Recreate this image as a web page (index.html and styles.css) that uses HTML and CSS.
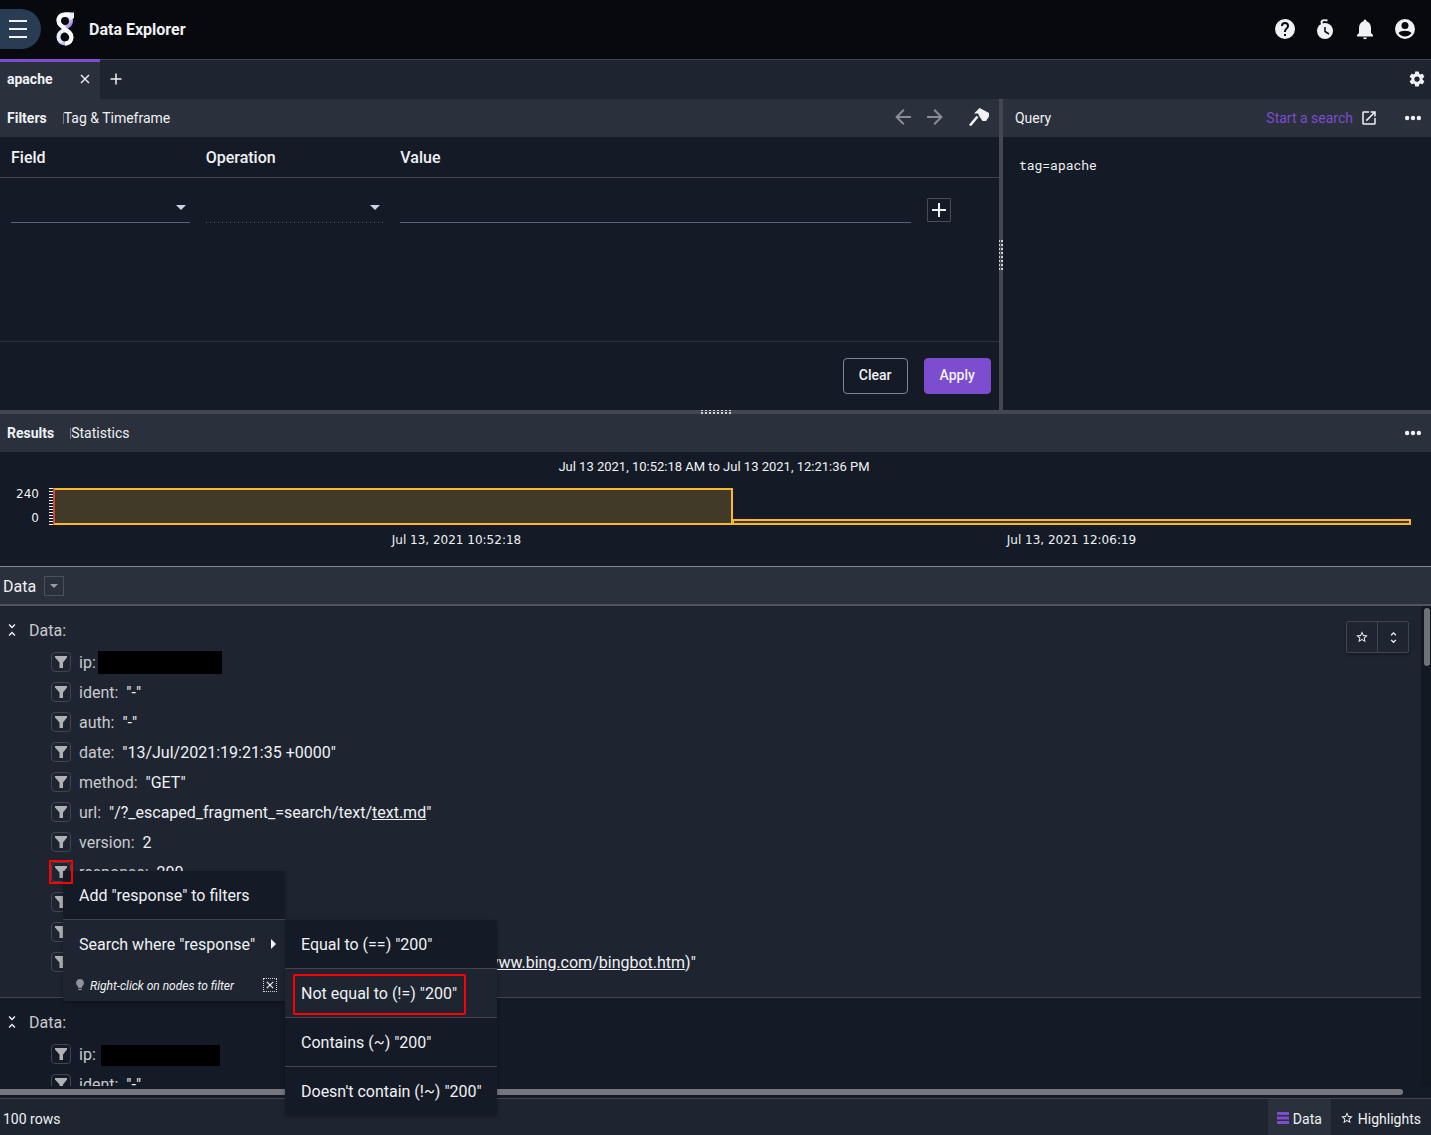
FILE: index.html
```html
<!DOCTYPE html>
<html lang="en">
<head>
<meta charset="utf-8">
<meta name="viewport" content="width=device-width, initial-scale=1">
<title>Data Explorer</title>
<link rel="stylesheet" href="styles.css">
</head>
<body>
<svg class="sprite" aria-hidden="true">
  <symbol id="i-filter" viewBox="0 0 12 12"><path d="M0 0h12v1.500L8 6.500V12H4.500V6.500L0 1.500z"/></symbol>
  <symbol id="i-close" viewBox="0 0 10 10"><path d="M1 1l8 8M9 1L1 9" fill="none" stroke="currentColor" stroke-width="1.400"/></symbol>
  <symbol id="i-caret" viewBox="0 0 10 5"><path d="M0 0h10L5 5z"/></symbol>
  <symbol id="i-dots" viewBox="0 0 24 24"><path d="M16 12a2.400 2.400 0 1 1 4.800 0a2.400 2.400 0 0 1-4.800 0M9.600 12a2.400 2.400 0 1 1 4.800 0a2.400 2.400 0 0 1-4.800 0M3.200 12a2.400 2.400 0 1 1 4.800 0a2.400 2.400 0 0 1-4.800 0"/></symbol>
  <symbol id="i-less" viewBox="0 0 24 24"><path d="M16.590 5.410L15.170 4L12 7.170L8.830 4L7.410 5.410L12 10M7.410 18.590L8.830 20L12 16.830L15.170 20L16.580 18.590L12 14z"/></symbol>
  <symbol id="i-star" viewBox="0 0 24 24"><path d="M12 15.390L8.240 17.660L9.230 13.380L5.910 10.500L10.290 10.130L12 6.090L13.710 10.130L18.090 10.500L14.770 13.380L15.760 17.660M22 9.240L14.810 8.630L12 2L9.190 8.630L2 9.240L7.450 13.970L5.820 21L12 17.270L18.180 21L16.540 13.970z"/></symbol>
</svg>

<div class="app">
  <header class="topbar">
    <button class="nav-toggle" type="button" aria-label="Main menu">
      <svg width="18" height="18" viewBox="0 0 18 18"><path d="M0 1h18M0 9h18M0 17h18" stroke="currentColor" stroke-width="2"/></svg>
    </button>
    <svg class="logo" width="18" height="34" viewBox="0 0 18 34" fill="none" aria-hidden="true">
      <defs>
        <linearGradient id="lg" x1="0" y1="0" x2="1" y2="1"><stop offset="0" stop-color="#e4effc"/><stop offset=".5" stop-color="#dfe6f8"/><stop offset="1" stop-color="#9a78d8"/></linearGradient>
      </defs>
      <g fill="none">
        <circle cx="9" cy="9" r="6" stroke="url(#lg)" stroke-width="4"/>
        <circle cx="9" cy="25" r="6.500" stroke="url(#lg)" stroke-width="4"/>
        <path d="M8 .5H18V6l-3 2-3-4z" fill="#e4effc"/>
        <path d="M14 2.500H9C2.500 2.500 .5 9 4.500 13l8.500 7.500c4.500 4.500 2 11-4 11" stroke="#fff" stroke-width="4"/>
      </g>
    </svg>
    <h1 class="brand">Data Explorer</h1>
    <nav class="top-actions" aria-label="Account">
      <button type="button" aria-label="Help"><svg width="24" height="24" viewBox="0 0 24 24"><path d="M15.070 11.250L14.170 12.170C13.450 12.890 13 13.500 13 15H11V14.500C11 13.390 11.450 12.390 12.170 11.670L13.410 10.410C13.780 10.050 14 9.550 14 9A2 2 0 0 0 10 9H8A4 4 0 0 1 16 9C16 9.880 15.640 10.670 15.070 11.250M13 19H11V17H13M12 2A10 10 0 1 0 22 12C22 6.470 17.500 2 12 2z"/></svg></button>
      <button type="button" aria-label="Recent searches"><svg width="24" height="24" viewBox="0 0 24 24"><circle cx="12" cy="14" r="8"/><path d="M9 7C7.500 3.500 10 2.500 14.500 3.500" fill="none" stroke="currentColor" stroke-width="2"/><path d="M12 10v4.500l4 2.500" fill="none" stroke="#07090e" stroke-width="1.500"/></svg></button>
      <button type="button" aria-label="Notifications"><svg width="24" height="24" viewBox="0 0 24 24"><path d="M20 18V19.500H4V18L6 16V11C6 7.900 7.530 5.170 10.500 4.290V4A1.500 1.500 0 0 1 13.500 4V4.290C16.470 5.170 18 7.900 18 11V16L20 18M14 20.500A2 1.700 0 0 1 10 20.500"/></svg></button>
      <button type="button" aria-label="Account"><svg width="24" height="24" viewBox="0 0 24 24"><path fill-rule="evenodd" d="M12 2a10 10 0 1 1 0 20a10 10 0 0 1 0-20M12 5a3.500 3.500 0 1 0 0 7a3.500 3.500 0 0 0 0-7M5.500 16c1.500 2.300 3.900 3.500 6.500 3.500s5-1.200 6.500-3.500c-1.200-1.500-4-2.200-6.500-2.200s-5.300.7-6.500 2.200"/></svg></button>
    </nav>
  </header>

  <div class="tabbar">
    <div class="tab">
      <span>apache</span>
      <button type="button" aria-label="Close tab"><svg width="10" height="10"><use href="#i-close"/></svg></button>
    </div>
    <button class="tab-add" type="button" aria-label="New tab"><svg width="12" height="12" viewBox="0 0 12 12"><path d="M6 .5v11M.5 6h11" stroke="currentColor" stroke-width="1.500"/></svg></button>
    <button class="tab-settings" type="button" aria-label="Settings"><svg width="18" height="18" viewBox="0 0 24 24"><path d="M12 15.500A3.500 3.500 0 1 1 15.500 12A3.500 3.500 0 0 1 12 15.500M19.430 12.970C19.470 12.650 19.500 12.330 19.500 12S19.470 11.340 19.430 11L21.540 9.370C21.730 9.220 21.780 8.950 21.660 8.730L19.660 5.270C19.540 5.050 19.270 4.960 19.050 5.050L16.560 6.050C16.040 5.660 15.500 5.320 14.870 5.070L14.500 2.420C14.460 2.180 14.250 2 14 2H10C9.750 2 9.540 2.180 9.500 2.420L9.130 5.070C8.500 5.320 7.960 5.660 7.440 6.050L4.950 5.050C4.730 4.960 4.460 5.050 4.340 5.270L2.340 8.730C2.210 8.950 2.270 9.220 2.460 9.370L4.570 11C4.530 11.340 4.500 11.670 4.500 12S4.530 12.650 4.570 12.970L2.460 14.630C2.270 14.780 2.210 15.050 2.340 15.270L4.340 18.730C4.460 18.950 4.730 19.030 4.950 18.950L7.440 17.940C7.960 18.340 8.500 18.680 9.130 18.930L9.500 21.580C9.540 21.820 9.750 22 10 22H14C14.250 22 14.460 21.820 14.500 21.580L14.870 18.930C15.500 18.670 16.040 18.340 16.560 17.940L19.050 18.950C19.270 19.030 19.540 18.950 19.660 18.730L21.660 15.270C21.780 15.050 21.730 14.780 21.540 14.630z"/></svg></button>
  </div>

  <div class="panes">
    <section class="filters">
      <div class="panel-head">
        <button class="view active" type="button">Filters</button>
        <button class="view" type="button">Tag &amp; Timeframe</button>
        <div class="head-tools">
          <button class="dim" type="button" aria-label="Back"><svg width="24" height="24" viewBox="0 0 24 24"><path d="M20 11v2H8l5.500 5.500-1.420 1.420L4.160 12l7.920-7.920L13.500 5.500 8 11z"/></svg></button>
          <button class="dim" type="button" aria-label="Forward"><svg width="24" height="24" viewBox="0 0 24 24"><path d="M4 11v2h12l-5.500 5.500 1.420 1.420L19.840 12l-7.920-7.920L10.500 5.500 16 11z"/></svg></button>
          <button class="hammer" type="button" aria-label="Build"><svg width="20" height="20" viewBox="0 0 20 20"><path d="M1 18.500L8.500 9.500" stroke="currentColor" stroke-width="2.600"/><path d="M5 6.500L10.500 1l3 1.500L20 6v3.500L17 14h-3.500L10.500 9.500 9 6.500z"/></svg></button>
        </div>
      </div>
      <form class="filter-form">
        <div class="filter-grid filter-labels">
          <label for="field">Field</label>
          <label for="operation">Operation</label>
          <label for="value">Value</label>
        </div>
        <div class="filter-grid filter-inputs">
          <div class="pick"><select id="field"></select><svg width="10" height="5"><use href="#i-caret"/></svg></div>
          <div class="pick off"><select id="operation" disabled></select><svg width="10" height="5"><use href="#i-caret"/></svg></div>
          <input id="value" type="text">
          <button class="add-filter" type="button" aria-label="Add filter"><svg width="14" height="14" viewBox="0 0 14 14"><path d="M7 0v14M0 7h14" stroke="currentColor" stroke-width="2"/></svg></button>
        </div>
        <div class="filter-actions">
          <button class="btn" type="reset">Clear</button>
          <button class="btn primary" type="button">Apply</button>
        </div>
      </form>
    </section>
    <div class="split split-v"><i></i></div>
    <section class="query">
      <div class="panel-head">
        <h2>Query</h2>
        <a class="start" href="#search">Start a search <svg width="18" height="18" viewBox="0 0 24 24"><path d="M14 3V5H17.590L7.760 14.830L9.170 16.240L19 6.410V10H21V3M19 19H5V5H12V3H5C3.890 3 3 3.900 3 5V19A2 2 0 0 0 5 21H19A2 2 0 0 0 21 19V12H19z"/></svg></a>
        <button class="more" type="button" aria-label="Query options"><svg width="22" height="22"><use href="#i-dots"/></svg></button>
      </div>
      <code>tag=apache</code>
    </section>
  </div>

  <div class="split split-h"><i></i></div>

  <div class="panel-head">
    <button class="view active" type="button">Results</button>
    <button class="view" type="button">Statistics</button>
    <button class="more" type="button" aria-label="Results options"><svg width="22" height="22"><use href="#i-dots"/></svg></button>
  </div>

  <section class="timeline" aria-label="Timeline">
    <p class="range">Jul 13 2021, 10:52:18 AM to Jul 13 2021, 12:21:36 PM</p>
    <div class="chart">
      <div class="y-labels"><span>240</span><span>0</span></div>
      <div class="ticks"></div>
      <div class="bars">
        <div class="bar" style="height:100%"></div>
        <div class="bar" style="height:16%"></div>
      </div>
    </div>
    <div class="x-labels"><span>Jul 13, 2021 10:52:18</span><span>Jul 13, 2021 12:06:19</span></div>
  </section>

  <div class="databar">
    <h2>Data</h2>
    <button type="button" aria-label="Column options"><svg width="8" height="4" viewBox="0 0 10 5"><use href="#i-caret"/></svg></button>
  </div>

  <div class="list-area">
    <div class="list">
      <article class="record">
        <div class="record-head"><button type="button" aria-label="Collapse"><svg width="18" height="18"><use href="#i-less"/></svg></button>Data:</div>
        <ul>
          <li><button type="button" aria-label="Filter ip"><svg width="12" height="12"><use href="#i-filter"/></svg></button><span class="key tight">ip:</span><span class="redacted"></span></li>
          <li><button type="button" aria-label="Filter ident"><svg width="12" height="12"><use href="#i-filter"/></svg></button><span class="key">ident:</span><span>"-"</span></li>
          <li><button type="button" aria-label="Filter auth"><svg width="12" height="12"><use href="#i-filter"/></svg></button><span class="key">auth:</span><span>"-"</span></li>
          <li><button type="button" aria-label="Filter date"><svg width="12" height="12"><use href="#i-filter"/></svg></button><span class="key">date:</span><span>"13/Jul/2021:19:21:35 +0000"</span></li>
          <li><button type="button" aria-label="Filter method"><svg width="12" height="12"><use href="#i-filter"/></svg></button><span class="key">method:</span><span>"GET"</span></li>
          <li><button type="button" aria-label="Filter url"><svg width="12" height="12"><use href="#i-filter"/></svg></button><span class="key">url:</span><span>"/?_escaped_fragment_=search/text/<a href="#text">text.md</a>"</span></li>
          <li><button type="button" aria-label="Filter version"><svg width="12" height="12"><use href="#i-filter"/></svg></button><span class="key">version:</span><span>2</span></li>
          <li><button class="marked" type="button" aria-label="Filter response"><svg width="12" height="12"><use href="#i-filter"/></svg></button><span class="key">response:</span><span>200</span></li>
          <li><button type="button" aria-label="Filter bytes"><svg width="12" height="12"><use href="#i-filter"/></svg></button><span class="key">bytes:</span><span>2134</span></li>
          <li><button type="button" aria-label="Filter referer"><svg width="12" height="12"><use href="#i-filter"/></svg></button><span class="key">referer:</span><span>"-"</span></li>
          <li><button type="button" aria-label="Filter agent"><svg width="12" height="12"><use href="#i-filter"/></svg></button><span class="key">useragent:</span><span>"Mozilla/5.0 (compatible; bingbot/2.0; +http://<a href="#bing">www.bing.com</a>/<a href="#bingbot">bingbot.htm</a>)"</span></li>
        </ul>
        <div class="record-tools">
          <button type="button" aria-label="Highlight"><svg width="14" height="14"><use href="#i-star"/></svg></button>
          <button type="button" aria-label="Expand all"><svg width="15" height="15" viewBox="0 0 24 24"><path d="M12 18.170L8.830 15L7.420 16.410L12 21L16.590 16.410L15.170 15M12 5.830L15.170 9L16.580 7.590L12 3L7.410 7.590L8.830 9z"/></svg></button>
        </div>
      </article>
      <article class="record alt">
        <div class="record-head"><button type="button" aria-label="Collapse"><svg width="18" height="18"><use href="#i-less"/></svg></button>Data:</div>
        <ul>
          <li><button type="button" aria-label="Filter ip"><svg width="12" height="12"><use href="#i-filter"/></svg></button><span class="key">ip:</span><span class="redacted small"></span></li>
          <li><button type="button" aria-label="Filter ident"><svg width="12" height="12"><use href="#i-filter"/></svg></button><span class="key">ident:</span><span>"-"</span></li>
        </ul>
      </article>
    </div>
    <div class="vbar"><i></i></div>
    <div class="hbar"><i></i></div>
  </div>

  <footer class="statusbar">
    <span>100 rows</span>
    <button class="status-tab active" type="button"><svg width="12" height="12" viewBox="0 0 12 12"><path d="M0 1.500h12M0 6h12M0 10.500h12" stroke="currentColor" stroke-width="3"/></svg>Data</button>
    <button class="status-tab" type="button"><svg width="14" height="14"><use href="#i-star"/></svg>Highlights</button>
  </footer>

  <div class="menu context-menu" role="menu">
    <button type="button" role="menuitem">Add "response" to filters</button>
    <button class="open" type="button" role="menuitem">Search where "response" <svg width="5" height="10" viewBox="0 0 5 10"><path d="M0 0l5 5-5 5z"/></svg></button>
    <div class="hint">
      <svg width="8" height="12" viewBox="0 0 8 12"><path d="M4 0a4 4 0 0 1 2 7.400V9H2V7.400A4 4 0 0 1 4 0M2 10h4v1H2z"/></svg>
      <em>Right-click on nodes to filter</em>
      <button type="button" aria-label="Dismiss hint"><svg width="8" height="8" viewBox="0 0 10 10"><use href="#i-close"/></svg></button>
    </div>
    <div class="menu submenu" role="menu">
      <button type="button" role="menuitem">Equal to (==) "200"</button>
      <button class="open chosen" type="button" role="menuitem">Not equal to (!=) "200"</button>
      <button type="button" role="menuitem">Contains (~) "200"</button>
      <button type="button" role="menuitem">Doesn't contain (!~) "200"</button>
    </div>
  </div>
</div>
</body>
</html>
```

FILE: styles.css
```css
:root {
  --bg: #141b26;
  --raised: #1e2530;
  --panel: #2a303c;
  --line: #40454f;
  --text: #f0f1f4;
  --muted: #c9cacd;
  --purple: #7c4dce;
  --amber: #fdb92b;
  --mark: #ff0000;
}

* { box-sizing: border-box; }

body {
  margin: 0;
  background: var(--bg);
  color: var(--text);
  font: 14px/20px Roboto, "Liberation Sans", sans-serif;
}

button {
  display: inline-flex;
  align-items: center;
  justify-content: center;
  padding: 0;
  border: 0;
  background: none;
  color: inherit;
  font: inherit;
}

svg { display: block; flex: none; fill: currentColor; }
h1, h2, p, ul { margin: 0; padding: 0; }
h2 { font-size: 14px; font-weight: 400; }
a { color: inherit; }

.sprite { position: absolute; width: 0; height: 0; }

.app {
  position: relative;
  display: flex;
  flex-direction: column;
  height: 100vh;
  overflow: hidden;
}

/* Top bar */
.topbar {
  display: flex;
  align-items: center;
  height: 59px;
  padding: 0 14px 1px 0;
  background: #07090e;
}
.nav-toggle {
  width: 41px;
  height: 40px;
  padding-right: 5px;
  border-radius: 0 20px 20px 0;
  background: #2a3b54;
}
.logo { margin-left: 15px; }
.brand { margin-left: 15px; font-size: 16px; font-weight: 700; line-height: 21px; }
.top-actions { display: flex; gap: 16px; margin-left: auto; }

/* Tabs */
.tabbar {
  display: flex;
  height: 40px;
  border-top: 1px solid var(--line);
  background: var(--raised);
}
.tab {
  display: flex;
  align-items: center;
  justify-content: space-between;
  width: 100px;
  margin-top: -1px;
  padding: 0 10px 3px 7px;
  border-top: 3px solid var(--purple);
  background: var(--panel);
  font-weight: 700;
}
.tab-add { width: 32px; padding-bottom: 1px; }
.tab-settings { margin-left: auto; padding: 0 5px 1px 0; }

/* Panel headers */
.panel-head {
  display: flex;
  flex: none;
  align-items: center;
  height: 38px;
  padding: 0 7px;
  background: var(--panel);
}
.view + .view { margin-left: 16px; }
.view:not(.active)::before {
  width: 1px;
  height: 11px;
  background: #747982;
  content: "";
}
.view.active { font-weight: 700; }
.head-tools { display: flex; align-items: center; gap: 8px; margin-left: auto; padding-bottom: 3px; }
.head-tools .dim { color: #898d95; }
.head-tools .hammer { margin: 0 3px 0 14px; }
.more { margin-left: auto; }

/* Filters and query */
.panes {
  display: grid;
  grid-template-columns: 7fr 4px 3fr;
  flex: none;
  height: 311px;
}
.filters { display: flex; flex-direction: column; }
.filter-form { display: flex; flex: 1; flex-direction: column; }
.filter-grid {
  display: grid;
  grid-template-columns: 7fr 7fr 20fr 24px;
  column-gap: 16px;
  padding: 0 48px 0 11px;
}
.filter-labels {
  align-items: center;
  height: 41px;
  border-bottom: 1px solid var(--line);
  font-size: 16px;
  font-weight: 500;
  line-height: 21px;
}
.filter-inputs { align-items: end; height: 45px; }
.pick { position: relative; }
.pick svg { position: absolute; top: 10px; right: 4px; color: #ccd3e2; }
.pick select,
.filter-inputs input {
  width: 100%;
  height: 28px;
  border: 0;
  border-bottom: 1px solid #56617f;
  border-radius: 0;
  outline: 0;
  background: none;
  color: inherit;
  font: inherit;
  appearance: none;
}
.pick select { display: block; }
.pick.off select {
  border-bottom: 0;
  background: repeating-linear-gradient(90deg, #5a606b 0 1px, transparent 1px 4px) bottom / 100% 1px no-repeat;
  opacity: 1;
}
.add-filter { width: 24px; height: 24px; margin-bottom: 1px; border: 1px solid #484c54; border-radius: 1px; }
.filter-actions {
  display: flex;
  justify-content: flex-end;
  gap: 16px;
  margin-top: auto;
  padding: 16px 8px;
  border-top: 1px solid #2a303c;
}
.btn {
  height: 36px;
  padding: 0 15px 2px;
  border: 1px solid #7885a3;
  border-radius: 4px;
  font-weight: 500;
}
.btn.primary { border-color: var(--purple); background: var(--purple); }

.query .panel-head { padding-left: 12px; }
.start {
  display: flex;
  align-items: center;
  gap: 7px;
  margin-left: auto;
  color: var(--purple);
  text-decoration: none;
}
.start svg { color: var(--text); }
.start + .more { margin-left: 24px; }
.query code {
  display: block;
  padding: 18px 16px;
  font: 13px/20px "Roboto Mono", "DejaVu Sans Mono", monospace;
}

/* Splitters */
.split { display: flex; flex: none; align-items: center; justify-content: center; background: #434750; }
.split-h { height: 4px; }
.split-h i {
  width: 30px;
  height: 4px;
  background:
    linear-gradient(transparent 0 1px, #434750 1px 2px, transparent 2px),
    repeating-linear-gradient(90deg, #cfcfc9 0 2px, #434750 2px 4px);
}
.split-v i {
  width: 4px;
  height: 30px;
  background:
    linear-gradient(90deg, transparent 0 1px, #434750 1px 2px, transparent 2px),
    repeating-linear-gradient(#cfcfc9 0 2px, #434750 2px 4px);
}

/* Timeline */
.timeline {
  flex: none;
  height: 114px;
  padding: 5px 20px 0 0;
}
.range { padding-left: 17px; font-size: 13px; text-align: center; }
.chart { display: flex; height: 37px; margin-top: 11px; }
.y-labels {
  display: flex;
  flex-direction: column;
  align-items: flex-end;
  justify-content: space-between;
  width: 39px;
  height: 36px;
}
.y-labels, .x-labels { font: 12px/12px "DejaVu Sans", sans-serif; }
.ticks {
  width: 4px;
  margin-left: 10px;
  background: repeating-linear-gradient(#fff 0 1px, transparent 1px 3px);
}
.bars { display: flex; flex: 1; align-items: flex-end; }
.bar { flex: 1; border: 2px solid var(--amber); background: #423a28; }
.bar:first-child { border-left: 2px solid #d9443a; }
.bar + .bar { margin-left: -1px; }
.x-labels { display: flex; margin: 9px 0 0 53px; }
.x-labels span { flex: 0 0 50%; text-align: center; }
.x-labels span:first-child { padding-left: 128px; }

/* Data list */
.databar {
  display: flex;
  flex: none;
  align-items: center;
  gap: 8px;
  height: 40px;
  padding: 0 3px;
  border-top: 1px solid #868b93;
  border-bottom: 2px solid #50555e;
  background: var(--panel);
}
.databar h2 { padding-top: 3px; font-size: 16px; }
.databar button { width: 20px; height: 20px; border: 1px solid #4b515c; color: #9a9da3; }

.list-area {
  display: grid;
  grid-template: minmax(0, 1fr) 12px / 1fr 10px;
  flex: 1;
  min-height: 0;
}
.list { overflow: hidden; }
.vbar { padding: 2px 1px 0 3px; background: #121922; }
.vbar i { display: block; height: 58px; border-radius: 3px; background: #707278; }
.hbar { padding-top: 3px; }
.hbar i { display: block; height: 6px; margin-right: 18px; border-radius: 0 3px 3px 0; background: #76777d; }

.record {
  position: relative;
  padding: 8px 0 20px;
  border-bottom: 1px solid var(--line);
  background: var(--raised);
  font-size: 16px;
}
.record.alt { background: var(--bg); }
.record-head {
  display: flex;
  align-items: center;
  gap: 8px;
  height: 33px;
  padding-left: 3px;
  color: var(--muted);
}
.record-head button { padding-bottom: 2px; color: var(--text); }
.record ul { list-style: none; }
.record li {
  display: flex;
  align-items: center;
  gap: 8px;
  height: 30px;
  padding-left: 51px;
  line-height: 21px;
  white-space: nowrap;
}
.record li button {
  position: relative;
  width: 20px;
  height: 20px;
  border: 1px solid #40454f;
  border-radius: 4px;
  color: #b0b2b6;
}
.record li .marked::after {
  position: absolute;
  z-index: 1;
  inset: -3px;
  border: 2px solid var(--mark);
  border-radius: 1px;
  content: "";
}
.key { color: var(--muted); }
.key.tight { margin-right: -6px; }
.redacted { width: 124px; height: 23px; background: #000; }
.redacted.small { width: 119px; height: 21px; margin: 2px 0 0 -3px; }
.record-tools {
  position: absolute;
  top: 15px;
  right: 12px;
  display: flex;
  border: 1px solid var(--line);
  border-radius: 2px;
  box-shadow: 0 2px 3px #0004;
}
.record-tools button { width: 30px; height: 30px; }
.record-tools button + button { width: 31px; border-left: 1px solid var(--line); }

/* Status bar */
.statusbar {
  display: flex;
  flex: none;
  align-items: center;
  height: 37px;
  padding: 0 1px 0 3px;
  border-top: 1px solid var(--line);
  background: var(--raised);
}
.statusbar span { margin-right: auto; padding-top: 3px; }
.status-tab { gap: 4px; height: 36px; padding: 3px 9px 0; }
.status-tab svg { margin-bottom: 2px; }
.status-tab.active { background: var(--panel); }
.status-tab.active svg { color: var(--purple); }

/* Context menu */
.menu {
  position: absolute;
  display: flex;
  flex-direction: column;
  background: var(--bg);
  box-shadow: 0 2px 4px #0005;
  font-size: 16px;
  line-height: 21px;
}
.context-menu { top: 871px; left: 63px; width: 222px; }
.submenu { top: 49px; left: 100%; width: 212px; }
.menu [role="menuitem"] {
  justify-content: space-between;
  height: 48px;
  padding: 0 9px 0 16px;
}
.menu [role="menuitem"] + [role="menuitem"] { height: 49px; border-top: 1px solid var(--line); }
.menu .open { background: var(--raised); }
.chosen { position: relative; }
.chosen::after {
  position: absolute;
  inset: 5px 31px 2px 8px;
  border: 2px solid var(--mark);
  border-radius: 2px;
  content: "";
}
.hint {
  display: flex;
  align-items: center;
  gap: 6px;
  height: 33px;
  padding: 1px 8px 0 13px;
  background: var(--raised);
  font-size: 12px;
}
.hint > svg { color: #8e9197; }
.hint em { padding-top: 2px; }
.hint button { width: 14px; height: 14px; margin-left: auto; border: 1px dotted #d5d6d9; }
```
